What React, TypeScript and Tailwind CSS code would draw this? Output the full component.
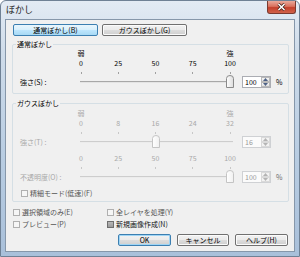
import React from "react";

const FONT = "font-['Noto_Sans_CJK_JP','Noto_Sans',sans-serif]";

function Btn({
  label,
  w,
  blue,
  def,
}: {
  label: string;
  w: string;
  blue?: boolean;
  def?: boolean;
}) {
  const look = blue
    ? "border-[#3c7fb1] bg-[linear-gradient(#eaf6fd_0%,#d9f0fc_45%,#bee6fd_50%,#a7d9f5_100%)]"
    : def
      ? "border-[#3c7fb1] bg-[linear-gradient(#f2f2f2_0%,#ebebeb_45%,#dddddd_50%,#cfcfcf_100%)] shadow-[inset_0_0_0_1px_#9fd5f5]"
      : "border-[#707070] bg-[linear-gradient(#f2f2f2_0%,#ebebeb_45%,#dddddd_50%,#cfcfcf_100%)] shadow-[inset_0_0_0_1px_#fbfbfb]";
  return (
    <div
      className={`flex h-[12px] items-center justify-center rounded-[2px] border text-[7px] leading-[10px] text-black ${w} ${look}`}
    >
      {label}
    </div>
  );
}

function Box({ checked, dim }: { checked?: boolean; dim?: boolean }) {
  return (
    <div
      className={`h-[7px] w-[7px] shrink-0 border ${
        checked
          ? "border-[#6e6e6e] bg-[linear-gradient(#b8b8b8,#9a9a9a)]"
          : dim
            ? "border-[#b0b0b0] bg-[#f6f6f6]"
            : "border-[#8e8f8f] bg-[linear-gradient(#e4e4e4,#ffffff)]"
      }`}
    />
  );
}

function Check({ label, checked, dim }: { label: string; checked?: boolean; dim?: boolean }) {
  return (
    <div className="flex h-[10px] items-center gap-[2px]">
      <Box checked={checked} dim={dim} />
      <span className={dim ? "text-[#555555]" : "text-[#111111]"}>{label}</span>
    </div>
  );
}

function Scale({ items, dim }: { items: string[]; dim?: boolean }) {
  return (
    <div
      className={`ml-[54px] flex h-[10px] w-[163px] justify-between ${dim ? "text-[#a8a8a8]" : "text-black"}`}
    >
      {items.map((t, i) => (
        <span key={i} className="w-[14px] text-center">
          {t}
        </span>
      ))}
    </div>
  );
}

function Ticks({ dim }: { dim?: boolean }) {
  return (
    <div className="ml-[54px] flex h-[2px] w-[163px] justify-between">
      {[0, 1, 2, 3, 4].map((i) => (
        <div key={i} className="flex w-[14px] justify-center">
          <div className={`h-[2px] w-[1px] ${dim ? "bg-[#c8c8c8]" : "bg-[#a0a0a0]"}`} />
        </div>
      ))}
    </div>
  );
}

function Spin({ value, dim }: { value: string; dim?: boolean }) {
  return (
    <div
      className={`ml-[5px] flex h-[12px] w-[29px] border ${
        dim ? "border-[#cfd1d4] bg-[#fbfbfb] text-[#9a9a9a]" : "border-[#abadb3] bg-white text-black"
      }`}
    >
      <div className="flex-1 pl-[2px] leading-[10px]">{value}</div>
      <div className="flex w-[9px] flex-col">
        {[0, 1].map((i) => (
          <div
            key={i}
            className={`flex flex-1 items-center justify-center border ${
              dim ? "border-[#dadada] bg-[#f3f3f3]" : "border-[#b9b9b9] bg-[linear-gradient(#f6f6f6,#e2e2e2)]"
            }`}
          >
            <svg width="5" height="3" viewBox="0 0 5 3">
              <path
                d={i === 0 ? "M0 3 L2.5 0 L5 3 Z" : "M0 0 L2.5 3 L5 0 Z"}
                fill={dim ? "#b4b4b4" : "#4d6185"}
              />
            </svg>
          </div>
        ))}
      </div>
    </div>
  );
}

function SliderRow({
  id,
  label,
  pos,
  value,
  pct,
  dim,
}: {
  id: string;
  label: string;
  pos: number;
  value: string;
  pct?: boolean;
  dim?: boolean;
}) {
  return (
    <div className="mt-[1px] flex h-[13px] items-center">
      <span className={`w-[54px] ${dim ? "text-[#a8a8a8]" : "text-black"}`}>{label}</span>
      <div className="relative h-[13px] w-[163px]">
        {/* track */}
        <div
          className={`absolute left-[6px] right-[4px] top-[6px] h-[2px] border-t ${
            dim ? "border-[#cdcdcd] bg-[#ececec]" : "border-[#a8a8a8] bg-[#e4e4e4]"
          }`}
        />
        <svg
          className="absolute top-0"
          style={{ left: 7 + pos * 149 - 4 }}
          width="8"
          height="13"
          viewBox="0 0 8 13"
        >
          <defs>
            <linearGradient id={id} x1="0" y1="0" x2="1" y2="0">
              <stop offset="0" stopColor="#ffffff" />
              <stop offset="1" stopColor={dim ? "#f0f0f0" : "#dcdcdc"} />
            </linearGradient>
          </defs>
          <path
            d="M0.5 3.5 Q0.5 0.5 4 0.5 Q7.5 0.5 7.5 3.5 V12.5 H0.5 Z"
            fill={`url(#${id})`}
            stroke={dim ? "#c4c4c4" : "#8a8a8a"}
          />
        </svg>
      </div>
      <Spin value={value} dim={dim} />
      {pct && <span className={`ml-[5px] ${dim ? "text-[#6a6a6a]" : "text-black"}`}>%</span>}
    </div>
  );
}

function Group({ title, children, cls }: { title: string; children: React.ReactNode; cls: string }) {
  return (
    <div className={`relative ml-[6px] mr-[5px] flex flex-col rounded-[2px] border border-[#d5dfe5] pl-[7px] ${cls}`}>
      <span className="absolute left-[3px] top-[-6px] bg-[#f0f0f0] px-[1px] leading-[10px] text-black">
        {title}
      </span>
      {children}
    </div>
  );
}

export default function App() {
  return (
    <div
      className={`${FONT} flex h-[257px] w-[300px] flex-col rounded-t-[6px] border border-[#6f8195] bg-[linear-gradient(#e3ebf4_0%,#cfdcea_20%,#b9cde2_60%,#a9c0da_100%)] px-[4px] pb-[4px] text-[7px] leading-[10px]`}
    >
      {/* title bar */}
      <div className="flex h-[18px] shrink-0 items-start">
        <span className="mt-[2px] ml-[1px] text-[9px] leading-[13px] text-[#1c1c1c]">ぼかし</span>
        <div className="ml-auto mr-[-1px] flex h-[13px] w-[29px] items-center justify-center rounded-b-[3px] border border-t-0 border-[#7a3a30] bg-[linear-gradient(#eaa99b_0%,#d9715e_45%,#c4402c_55%,#d0624a_100%)]">
          <svg width="9" height="8" viewBox="0 0 9 8">
            <path d="M1.5 1 L7.5 7 M7.5 1 L1.5 7" stroke="#3b1a14" strokeWidth="3" />
            <path d="M1.5 1 L7.5 7 M7.5 1 L1.5 7" stroke="#ffffff" strokeWidth="1.6" />
          </svg>
        </div>
      </div>

      {/* client area */}
      <div className="flex flex-1 flex-col border border-[#8697aa] bg-[#f0f0f0]">
        <div className="ml-[7px] mt-[4px] flex gap-[4px]">
          <Btn label="通常ぼかし(B)" w="w-[85px]" blue />
          <Btn label="ガウスぼかし(G)" w="w-[85px]" />
        </div>

        <Group title="通常ぼかし" cls="mt-[8px] h-[50px] pt-[3px]">
          <Scale items={["弱", "", "", "", "強"]} />
          <Scale items={["0", "25", "50", "75", "100"]} />
          <div className="mt-[4px]">
            <Ticks />
          </div>
          <SliderRow id="thumbA" label="強さ(S) :" pos={1} value="100" pct />
        </Group>

        <Group title="ガウスぼかし" cls="mt-[9px] h-[99px] pt-[4px]">
          <Scale items={["弱", "", "", "", "強"]} dim />
          <Scale items={["0", "8", "16", "24", "32"]} dim />
          <div className="mt-[4px]">
            <Ticks dim />
          </div>
          <SliderRow id="thumbB" label="強さ(T) :" pos={0.5} value="16" dim />
          <div className="mt-[5px]">
            <Scale items={["0", "25", "50", "75", "100"]} dim />
          </div>
          <div className="mt-[4px]">
            <Ticks dim />
          </div>
          <SliderRow id="thumbC" label="不透明度(O) :" pos={1} value="100" pct dim />
          <div className="mt-[5px] ml-[1px]">
            <Check label="精細モード(低速)(F)" dim />
          </div>
        </Group>

        <div className="ml-[7px] mt-[5px] grid grid-cols-[94px_auto] gap-y-[2px]">
          <Check label="選択領域のみ(E)" dim />
          <Check label="全レイヤを処理(Y)" dim />
          <Check label="プレビュー(P)" dim />
          <Check label="新規画像作成(N)" checked />
        </div>

        <div className="mr-[6px] mt-[5px] flex justify-end gap-[6px]">
          <Btn label="OK" w="w-[53px]" def />
          <Btn label="キャンセル" w="w-[52px]" />
          <Btn label="ヘルプ(H)" w="w-[53px]" />
        </div>
      </div>
    </div>
  );
}
